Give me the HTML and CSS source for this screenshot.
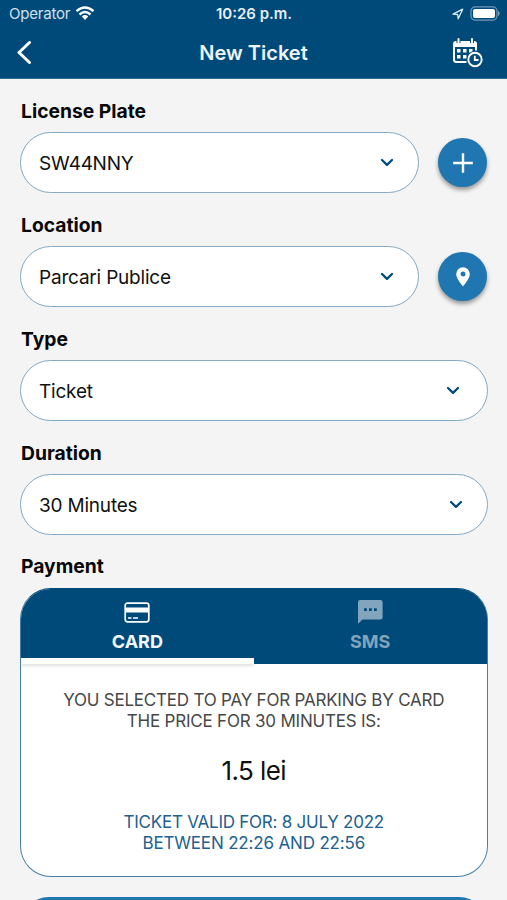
FILE: index.html
```html
<!DOCTYPE html>
<html lang="en">
<head>
<meta charset="utf-8">
<title>New Ticket</title>
<link rel="stylesheet" href="styles.css">
</head>
<body>
<header class="header">
  <div class="status">
    <div class="carrier"><span class="carrier-name">Operator</span>
      <svg class="wifi" width="20" height="15" viewBox="0 0 20 15"><g fill="none" stroke="#fff" stroke-width="2.4"><path d="M1.5 5.2Q10-2 18.500 5.200"/><path d="M4.500 8.500Q10 3.700 15.500 8.500"/></g><path d="M6.800 10.400Q10 7.700 13.200 10.400L10 14Z" fill="#fff"/></svg>
    </div>
    <span class="clock">10:26 p.m.</span>
    <div class="indicators">
      <svg width="12" height="12" viewBox="0 0 12 12"><path d="M1 6.200 10.700 1.200 6.200 10.800 5.700 6.500Z" fill="none" stroke="#dce8f1" stroke-width="1.300" stroke-linejoin="round"/></svg>
      <svg width="31" height="15" viewBox="0 0 31 15"><rect x="1" y=".9" width="26" height="13.200" rx="4" fill="none" stroke="#7198b5" stroke-width="1.200"/><rect x="3" y="3" width="22" height="9" rx="2" fill="#fff"/><path d="M28.500 5.300Q30.300 7.500 28.500 9.700Z" fill="#7198b5" stroke="#7198b5"/></svg>
    </div>
  </div>
  <div class="navbar">
    <svg class="back" width="16" height="24" viewBox="0 0 16 24"><path d="M13.500 1.500 3 11.500 13.500 21.500" fill="none" stroke="#fff" stroke-width="3" stroke-linecap="round" stroke-linejoin="round"/></svg>
    <h1 class="title">New Ticket</h1>
    <svg class="calendar" width="32" height="30" viewBox="0 0 32 30">
      <path d="M14.500 24H4.500Q2 24 2 21.500V6Q2 4 4 4H22Q24 4 24 6V12.500" fill="none" stroke="#fff" stroke-width="2"/>
      <path d="M2 4H24V9H2Z" fill="#fff"/>
      <path d="M6.500 0V5M20 0V5" stroke="#004a7a" stroke-width="4"/>
      <path d="M6.500 1V5M20 1V5" stroke="#fff" stroke-width="2" stroke-linecap="round"/>
      <path d="M5 11h3.500v3.500H5zM11 11h3.500v3.500H11zM17 11h3.500v3.500H17zM5 17h3.500v3.500H5zM11 17h3.500v3.500H11z" fill="#fff"/>
      <circle cx="23" cy="21.500" r="8.500" fill="#004a7a"/>
      <circle cx="23" cy="21.500" r="6.700" fill="none" stroke="#fff" stroke-width="1.900"/>
      <path d="M22.800 17.700V22H26.500" fill="none" stroke="#fff" stroke-width="1.800"/>
    </svg>
  </div>
</header>
<main class="form">
  <section class="group">
    <h2 class="label">License Plate</h2>
    <div class="row">
      <div class="select short"><span class="plate">SW44NNY</span><svg class="chevron" width="14" height="9" viewBox="0 0 14 9"><path d="M2 2 7 6.800 12 2"/></svg></div>
      <button class="round" aria-label="Add"><svg width="22" height="22" viewBox="0 0 22 22"><path d="M11 1.200V20.800M1.200 11H20.800" stroke="#fff" stroke-width="2.400"/></svg></button>
    </div>
  </section>
  <section class="group">
    <h2 class="label">Location</h2>
    <div class="row">
      <div class="select short"><span class="place">Parcari Publice</span><svg class="chevron" width="14" height="9" viewBox="0 0 14 9"><path d="M2 2 7 6.800 12 2"/></svg></div>
      <button class="round" aria-label="Map"><svg width="16" height="20" viewBox="0 0 16 20"><path fill="#fff" fill-rule="evenodd" d="M8 .3A6.800 6.800 0 0 0 1.200 7.100C1.200 12 8 19.400 8 19.400S14.800 12 14.800 7.100A6.800 6.800 0 0 0 8 .3ZM8 4.500A2.500 2.500 0 1 1 8 9.500A2.500 2.500 0 0 1 8 4.500Z"/></svg></button>
    </div>
  </section>
  <section class="group">
    <h2 class="label">Type</h2>
    <div class="select"><span class="kind">Ticket</span><svg class="chevron" width="14" height="9" viewBox="0 0 14 9"><path d="M2 2 7 6.800 12 2"/></svg></div>
  </section>
  <section class="group">
    <h2 class="label">Duration</h2>
    <div class="select duration"><span class="minutes">30 Minutes</span><svg class="chevron" width="14" height="9" viewBox="0 0 14 9"><path d="M2 2 7 6.800 12 2"/></svg></div>
  </section>
  <section>
    <h2 class="label payment">Payment</h2>
    <div class="card">
      <div class="tabs">
        <div class="tab active">
          <svg width="26" height="22" viewBox="0 0 26 22"><rect x="1.200" y="1.200" width="23.600" height="18.600" rx="2.300" fill="none" stroke="#fff" stroke-width="1.700"/><path d="M1 5.500H25V10.500H1Z" fill="#fff"/><path d="M4 16H7.500M9 16H14" stroke="#fff" stroke-width="1.600"/></svg>
          <span>CARD</span>
        </div>
        <div class="tab muted">
          <svg width="26" height="25" viewBox="0 0 26 25"><path d="M3.300 0H23.300Q25.600 0 25.600 2.300V17.200Q25.600 19.500 23.300 19.500H5.500L1 23.800V2.300Q1 0 3.300 0Z" fill="#80a5bd"/><path d="M7 8.300h2.800v2.800H7zM12 8.300h2.800v2.800H12zM17 8.300h2.800v2.800H17z" fill="#004a7a"/></svg>
          <span>SMS</span>
        </div>
      </div>
      <div class="details">
        <p class="notice">YOU SELECTED TO PAY FOR PARKING BY CARD<br>THE PRICE FOR 30 MINUTES IS:</p>
        <p class="price">1.5 lei</p>
        <p class="validity"><span class="valid-date">TICKET VALID FOR: 8 JULY 2022</span><br>BETWEEN 22:26 AND 22:56</p>
      </div>
    </div>
  </section>
  <button class="submit" aria-label="Pay"></button>
</main>
</body>
</html>
```
FILE: styles.css
```css
* { box-sizing: border-box; }
html { height: 100%; overflow: hidden; }
body { margin: 0; height: 900px; overflow: hidden; background: #f4f4f4; color: #111; font-family: Inter, "Liberation Sans", sans-serif; }
h1, h2, p { margin: 0; }
svg { display: block; flex: none; }
.header { height: 79px; background: #004a7a; border-bottom: 1px solid #2d6b95; color: #fff; }
.status { height: 27px; padding: 0 8px 0 9px; display: grid; grid-template-columns: 1fr auto 1fr; align-items: center; font-size: 15px; line-height: 27px; }
.carrier, .indicators { display: flex; align-items: center; }
.carrier { gap: 5px; color: #cfe0ec; letter-spacing: -.2px; }
.indicators { justify-content: flex-end; gap: 6px; margin-right: -2px; }
.clock { font-weight: 600; color: #e6eff6; }
.navbar { height: 51px; display: grid; grid-template-columns: 1fr auto 1fr; align-items: center; padding: 0 16px; }
.title { font-size: 20px; font-weight: 600; line-height: 24px; color: #eef5fa; }
.calendar { justify-self: end; margin-right: 7px; }
.form { height: 821px; overflow: hidden; padding: 0 19.500px 0 20px; }
.group { height: 114px; }
.label { height: 53px; padding: 20px 0 0 1px; font-size: 19.300px; line-height: 24px; font-weight: 700; color: #080808; white-space: nowrap; }
.payment { padding-top: 19px; }
.row { display: flex; align-items: center; gap: 19px; }
.select { height: 61px; border: 1.400px solid #83a9c3; border-radius: 31px; background: #fff; display: flex; align-items: center; justify-content: space-between; padding: 0 27px 0 18px; font-size: 19px; letter-spacing: -.2px; white-space: nowrap; }
.select span { padding-top: 1px; }
.short { width: 399px; padding-right: 24px; }
.duration { padding-right: 24px; }
.select .plate { letter-spacing: -.300px; }
.chevron { fill: none; stroke: #004a7a; stroke-width: 2.300; stroke-linecap: round; stroke-linejoin: round; }
.round { width: 49px; height: 49px; border: 0; border-radius: 50%; padding: 0; flex: none; display: grid; place-items: center; background: #2076b1; box-shadow: 0 3px 4px rgba(0, 0, 0, .38); }
.card { height: 289px; border: 1px solid #457fa8; border-top-color: #004a7a; border-radius: 31px; background: #fff; overflow: hidden; }
.tabs { height: 75px; display: flex; background: #004a7a; }
.tab { flex: 1; display: flex; flex-direction: column; align-items: center; font-size: 18px; line-height: 22px; font-weight: 700; }
.active { color: #f5fafe; border-bottom: 6px solid #fff; padding-top: 13px; gap: 7px; box-shadow: 0 2px 3px rgba(0, 0, 0, .12); }
.muted { color: #80a5bd; background: #004a7a; padding-top: 11px; gap: 6px; }
.details { padding-top: 26px; text-align: center; font-size: 17px; line-height: 20.500px; white-space: nowrap; }
.notice { color: #484848; letter-spacing: -.210px; }
.price { font-size: 26px; line-height: 32px; margin: 24px 0 25px; letter-spacing: -.600px; }
.validity { color: #22618f; line-height: 21px; letter-spacing: -.170px; }
.valid-date { letter-spacing: -.240px; }
.submit { display: block; width: 100%; height: 58px; margin-top: 20px; border: 0; border-radius: 30px; background: #2076b1; }
```
